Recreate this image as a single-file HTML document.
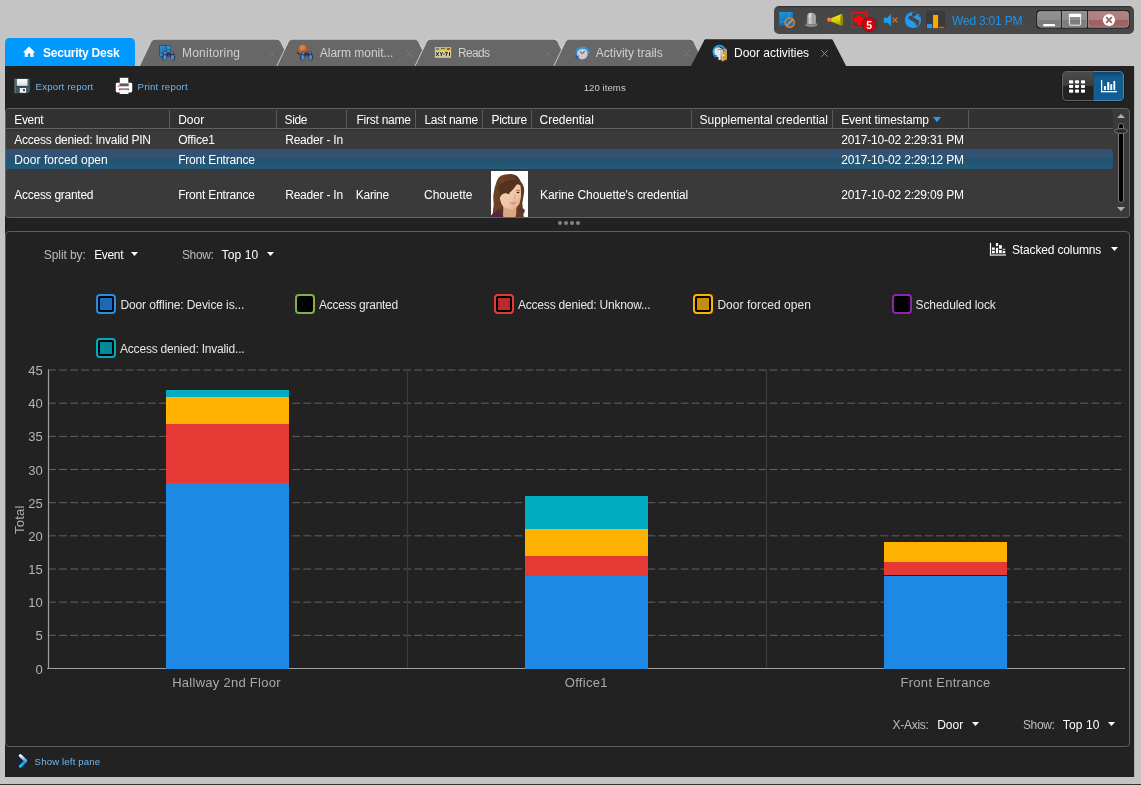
<!DOCTYPE html>
<html><head><meta charset="utf-8"><title>Security Desk</title>
<style>
html,body{margin:0;padding:0}
body{width:1141px;height:785px;overflow:hidden;background:#c4c4c4;position:relative;font-family:"Liberation Sans",sans-serif}
.t{position:absolute;white-space:nowrap;line-height:1}
.a{position:absolute;display:block}
.b{position:absolute;box-sizing:border-box}
</style></head><body><div id="w" style="position:absolute;left:0;top:0;width:1141px;height:785px;will-change:transform">

<div class="b" style="left:0;top:784px;width:1141px;height:1px;background:#333"></div>
<div class="b" style="left:5px;top:66px;width:1129px;height:711px;background:#222"></div>
<svg class="a" style="left:774px;top:6px" width="360" height="28" viewBox="774 6 360 28">
<defs>
<linearGradient id="gbtn" x1="0" y1="0" x2="0" y2="1"><stop offset="0" stop-color="#929292"/><stop offset="0.53" stop-color="#8c8c8c"/><stop offset="0.53" stop-color="#7c7c7c"/><stop offset="1" stop-color="#7e7e7e"/></linearGradient>
<linearGradient id="gcls" x1="0" y1="0" x2="0" y2="1"><stop offset="0" stop-color="#b48484"/><stop offset="0.53" stop-color="#ae7e7e"/><stop offset="0.53" stop-color="#9c6262"/><stop offset="1" stop-color="#9e6666"/></linearGradient>
<linearGradient id="gbell" x1="0" y1="0" x2="1" y2="0"><stop offset="0" stop-color="#7c7c7c"/><stop offset="0.35" stop-color="#d4d4d4"/><stop offset="0.7" stop-color="#9a9a9a"/><stop offset="1" stop-color="#b4b4b4"/></linearGradient>
<linearGradient id="ghorn" x1="0" y1="0" x2="0" y2="1"><stop offset="0" stop-color="#f0ea20"/><stop offset="0.55" stop-color="#dcd000"/><stop offset="1" stop-color="#9a9000"/></linearGradient>
<linearGradient id="gmon" x1="0" y1="0" x2="0.4" y2="1"><stop offset="0" stop-color="#2098e4"/><stop offset="1" stop-color="#0e68b2"/></linearGradient>
<linearGradient id="gtray" x1="0" y1="0" x2="0" y2="1"><stop offset="0" stop-color="#2c2c2c"/><stop offset="0.07" stop-color="#464646"/><stop offset="1" stop-color="#484848"/></linearGradient>
</defs>
<rect x="774" y="6" width="360" height="28" rx="5" fill="url(#gtray)"/>
<!-- monitor icon -->
<rect x="779.2" y="12" width="13.7" height="13.8" fill="url(#gmon)"/>
<rect x="788.6" y="12" width="0.8" height="13.8" fill="#48aeea" fill-opacity="0.7"/><rect x="779.2" y="21.6" width="13.7" height="0.8" fill="#48aeea" fill-opacity="0.6"/>
<circle cx="789.7" cy="22.6" r="4.6" fill="#1478c4" fill-opacity="0.5" stroke="#dc8030" stroke-width="1.5"/>
<path d="M786.5 25.8L792.9 19.4" stroke="#e89048" stroke-width="1.5"/>
<!-- siren -->
<path d="M806.8 24.5V17Q806.8 12.8 811.3 12.8Q815.8 12.8 815.8 17V24.5Z" fill="url(#gbell)"/>
<path d="M805.6 23.4Q811.4 25.4 817.2 23.4V25.6Q811.4 28 805.6 25.6Z" fill="#a4a4a4"/>
<path d="M806 24.2Q811.4 26.2 816.8 24.2" stroke="#666" stroke-width="0.8" fill="none"/>
<path d="M809 17Q809 14.4 811 13.6" stroke="#fff" stroke-width="0.9" fill="none" stroke-opacity="0.8"/>
<!-- horn -->
<path d="M830.4 18.4L842 13.8Q843.4 20 842 26.1L830.4 21.2Z" fill="url(#ghorn)"/>
<ellipse cx="841.8" cy="20" rx="1.5" ry="6" fill="#8e8608"/>
<circle cx="829.2" cy="19.8" r="2.2" fill="#e8701c"/>
<circle cx="828.8" cy="19.3" r="1" fill="#f69a4a"/>
<!-- red cross box -->
<rect x="851.6" y="12.6" width="14.9" height="14.7" fill="#3e4848" stroke="#ff0a0a" stroke-width="1.3"/>
<path d="M856.9 14.9h4.1v2.8h3.2v4.5h-3.2v2.9h-4.1v-2.9h-3.2v-4.5h3.2Z" fill="#ff0505"/>
<circle cx="869.2" cy="24.6" r="7.4" fill="#2c2c2c"/>
<circle cx="869.2" cy="24.6" r="6.8" fill="#d40209"/>
<!-- speaker -->
<path d="M883.8 17.7h3.7l3.6-3.9v12.5l-3.6-3.6h-3.7Z" fill="#1e9af0"/>
<path d="M892.6 17.6l4.8 4.8M897.4 17.6l-4.8 4.8" stroke="#e06a1c" stroke-width="1.3" fill="none"/>
<!-- globe -->
<circle cx="913" cy="20" r="8.1" fill="#1f9cf5"/>
<path d="M912.6 12.6q2.8-0.8 5 0.6l-1.4 1.8q-1.2 1.6-2.8 1.8q-1-0.4-1.6-1.6q-0.2-1.6 0.8-2.6Z" fill="#474747"/>
<path d="M908 17.4q1.8-2 3.6-1.4l3.8 2.6q1.8 1.4 3.6 1.6q0.8 1.8-0.2 3.6q-1 2.4-2.4 2.2q-0.8-1.2-0.6-2.6q-1.8-0.6-2.8-2.2q-2.6-0.4-4.2-2.4Q907.6 18 908 17.4Z" fill="#474747"/>
<path d="M917.8 14.4q1.6 1 2.2 2.6l-1.6-0.2Z" fill="#474747"/>
<!-- bars -->
<rect x="926" y="10.8" width="18.9" height="17.8" fill="#3a3a3a"/>
<rect x="927" y="23.9" width="5.1" height="4.3" fill="#1e9af0"/>
<rect x="933" y="14.9" width="5.1" height="13.3" fill="#ffa500"/>
<rect x="939" y="26.8" width="5.3" height="1.4" fill="#e8501c"/>
<!-- window buttons -->
<rect x="1036.3" y="10" width="93.4" height="18.4" rx="3.6" fill="#1c1c1c"/>
<path d="M1037.6 14.4Q1037.6 11.4 1040.6 11.4H1060.6V27.2H1040.6Q1037.6 27.2 1037.6 24.2Z" fill="url(#gbtn)" stroke="#a8a8a8" stroke-width="0.7"/>
<rect x="1062.4" y="11.4" width="24.2" height="15.8" fill="url(#gbtn)" stroke="#a8a8a8" stroke-width="0.7"/>
<path d="M1088.4 11.4H1125.6Q1128.6 11.4 1128.6 14.4V24.2Q1128.6 27.2 1125.6 27.2H1088.4Z" fill="url(#gcls)" stroke="#c0a0a0" stroke-width="0.7"/>
<rect x="1043.1" y="23.9" width="12" height="2.3" rx="0.8" fill="#fff"/>
<rect x="1069.4" y="14.4" width="11.2" height="10.8" rx="1" fill="none" stroke="#f0f0f0" stroke-width="1"/>
<rect x="1068.9" y="13.8" width="12.2" height="3.3" rx="1" fill="#fff"/>
<circle cx="1109" cy="20" r="6.1" fill="#fff"/>
<path d="M1106.1 17.1l5.8 5.8M1111.9 17.1l-5.8 5.8" stroke="#a46464" stroke-width="1.9" fill="none"/>
</svg>
<div class="t" style="left:866.2px;top:19.6px;font-size:10.5px;font-weight:bold;color:#fff">5</div>
<div class="t" style="left:952px;top:14.5px;font-size:12px;color:#1c92e8;letter-spacing:-0.2px">Wed 3:01 PM</div>

<div class="b" style="left:1134px;top:66px;width:1px;height:711px;background:#b2b2b2"></div>
<svg class="a" style="left:0;top:30px" width="1141" height="40" viewBox="0 30 1141 40">
<path d="M5 66V43Q5 38 10 38H130Q135 38 135 43V66Z" fill="#0099ff"/>

<path d="M139.20 66.5L150.96 41.800000000000004Q152.20 39.2 155.20 39.2H276.60Q279.60 39.2 280.84 41.800000000000004L292.60 66.5Z" fill="#676767"/><path d="M139.20 66.5L150.96 41.800000000000004Q152.20 39.2 155.20 39.2H276.60Q279.60 39.2 280.84 41.800000000000004L292.60 66.5" fill="none" stroke="#d2d2d2" stroke-width="0.9"/>
<path d="M276.60 66.5L288.36 41.800000000000004Q289.60 39.2 292.60 39.2H414.40Q417.40 39.2 418.64 41.800000000000004L430.40 66.5Z" fill="#676767"/><path d="M276.60 66.5L288.36 41.800000000000004Q289.60 39.2 292.60 39.2H414.40Q417.40 39.2 418.64 41.800000000000004L430.40 66.5" fill="none" stroke="#d2d2d2" stroke-width="0.9"/>
<path d="M414.80 66.5L426.56 41.800000000000004Q427.80 39.2 430.80 39.2H553.60Q556.60 39.2 557.84 41.800000000000004L569.60 66.5Z" fill="#676767"/><path d="M414.80 66.5L426.56 41.800000000000004Q427.80 39.2 430.80 39.2H553.60Q556.60 39.2 557.84 41.800000000000004L569.60 66.5" fill="none" stroke="#d2d2d2" stroke-width="0.9"/>
<path d="M553.60 66.5L565.36 41.800000000000004Q566.60 39.2 569.60 39.2H689.60Q692.60 39.2 693.84 41.800000000000004L705.60 66.5Z" fill="#676767"/><path d="M553.60 66.5L565.36 41.800000000000004Q566.60 39.2 569.60 39.2H689.60Q692.60 39.2 693.84 41.800000000000004L705.60 66.5" fill="none" stroke="#d2d2d2" stroke-width="0.9"/>
<path d="M690.70 66.5L704.39 40.0Q704.80 39.2 705.80 39.2H831.30Q832.30 39.2 832.71 40.0L846.40 66.5Z" fill="#222"/>
</svg>
<div class="b" style="left:5px;top:66px;width:1129px;height:3px;background:#222"></div>
<svg class="a" style="left:0;top:40px" width="850" height="26" viewBox="0 40 850 26">
<defs>
<linearGradient id="gscr" x1="0" y1="0" x2="1" y2="1"><stop offset="0" stop-color="#3496cc"/><stop offset="1" stop-color="#1c6aa4"/></linearGradient>
<radialGradient id="gbel" cx="0.45" cy="0.3" r="0.7"><stop offset="0" stop-color="#e2924a"/><stop offset="0.6" stop-color="#ca5c28"/><stop offset="1" stop-color="#a6441c"/></radialGradient>
<linearGradient id="garc" x1="1" y1="0" x2="0" y2="1"><stop offset="0" stop-color="#2c9ee4"/><stop offset="0.6" stop-color="#2a90e0"/><stop offset="1" stop-color="#1c5ed0"/></linearGradient>

</defs>
<!-- home -->
<path d="M29.1 46.4L35.2 52.4H33.4V57.1H30.3V53.6H27.9V57.1H24.8V52.4H23Z" fill="#fff"/>
<path d="M24.8 54.5H33.4V57.1H30.3V54.5H27.9V57.1H24.8Z" fill="#d8ecfc"/>
<!-- monitoring -->
<rect x="159" y="45" width="12" height="11.8" fill="#1a5a8c"/>
<rect x="160" y="46" width="6" height="6.6" fill="url(#gscr)"/><rect x="166.8" y="46" width="3.4" height="2.9" fill="#3498cc"/><rect x="166.8" y="49.7" width="3.4" height="2.9" fill="#2a86be"/>
<rect x="160" y="53.4" width="3" height="2.6" fill="#2a88c8"/><rect x="163.8" y="53.4" width="6.4" height="2.6" fill="#1f70b0"/>
<g transform="translate(162.3 51.6)">
<path d="M1.2 0.4Q2.6-1 4.6-0.2L6.3 1.4L8 -0.2Q10-1 11.4 0.4L13 6.2Q12.6 8.8 10.4 9.2Q8 8.8 7.6 5L6.3 3.2L5 5Q4.6 8.8 2.2 9.2Q0 8.8-0.4 6.2Z" fill="#2c3454"/>
<path d="M1.4 0.6Q2.6-0.6 4.4 0L5 1.2L2 3.4ZM8.2 0Q10-0.6 11.2 0.6L10.6 2.6L7.8 1.2Z" fill="#7e86a4" fill-opacity="0.8"/>
<ellipse cx="2.5" cy="5.9" rx="1.8" ry="2.8" fill="#3a80c4"/><ellipse cx="10.1" cy="5.9" rx="1.8" ry="2.8" fill="#3a80c4"/>
<ellipse cx="2.7" cy="5.4" rx="0.9" ry="1.5" fill="#4c98d6"/><ellipse cx="10.3" cy="5.4" rx="0.9" ry="1.5" fill="#4c98d6"/>
</g>
<!-- alarm -->
<path d="M297 52.2L299.8 54.6" stroke="#333" stroke-width="1.4"/>
<circle cx="302.8" cy="49.6" r="4.8" fill="url(#gbel)"/>
<circle cx="302.8" cy="50.3" r="0.9" fill="#8a8a8a"/>
<g transform="translate(300.3 51.6)">
<path d="M1.2 0.4Q2.6-1 4.6-0.2L6.3 1.4L8 -0.2Q10-1 11.4 0.4L13 6.2Q12.6 8.8 10.4 9.2Q8 8.8 7.6 5L6.3 3.2L5 5Q4.6 8.8 2.2 9.2Q0 8.8-0.4 6.2Z" fill="#2c3454"/>
<path d="M1.4 0.6Q2.6-0.6 4.4 0L5 1.2L2 3.4ZM8.2 0Q10-0.6 11.2 0.6L10.6 2.6L7.8 1.2Z" fill="#7e86a4" fill-opacity="0.8"/>
<ellipse cx="2.5" cy="5.9" rx="1.8" ry="2.8" fill="#3a80c4"/><ellipse cx="10.1" cy="5.9" rx="1.8" ry="2.8" fill="#3a80c4"/>
<ellipse cx="2.7" cy="5.4" rx="0.9" ry="1.5" fill="#4c98d6"/><ellipse cx="10.3" cy="5.4" rx="0.9" ry="1.5" fill="#4c98d6"/>
</g>
<!-- plate -->
<rect x="434.9" y="46.9" width="16.2" height="11.1" rx="0.8" fill="#d6cfae"/>
<path d="M435.7 46.9H450.3Q451.1 46.9 451.1 47.7V50.4Q447 51.2 443 50.6Q439 51.4 434.9 50.6V47.7Q434.9 46.9 435.7 46.9Z" fill="#dcc032"/>
<rect x="434.9" y="56.6" width="16.2" height="1.4" fill="#c8b96c"/>
<rect x="436.1" y="48.1" width="2.8" height="1.7" fill="#4a72d8"/><rect x="447.1" y="48.1" width="2.8" height="1.7" fill="#a83848"/>
<rect x="441" y="47.9" width="3.8" height="1" fill="#4a5468"/>
<path d="M436.1 52.2l2.6 3.7M438.7 52.2l-2.6 3.7M440 52.2l1.3 1.8l1.3-1.8M441.3 54v1.9M445.1 52.4h2.2l-1.3 3.5M449.5 52.2v3.7" stroke="#161616" stroke-width="1" fill="none"/>
<rect x="443.2" y="53.5" width="1.2" height="1.2" fill="#161616"/>
<!-- activity clock -->
<circle cx="582.3" cy="53.8" r="5.6" fill="#c2c2c2"/>
<circle cx="582.3" cy="53.8" r="4.6" fill="#cccccc"/>
<path d="M580.2 51.8L582.3 53.5L584.7 51.3" stroke="#333" stroke-width="0.9" fill="none"/>
<path d="M589.2 52.8A7 7 0 0 0 575.6 53.4Q575.4 55.6 576.4 57.4" stroke="url(#garc)" stroke-width="1.9" fill="none"/>
<path d="M574.6 56.2L579 55.6L577.6 59.6Z" fill="#1c5ed0"/>
<path d="M587.6 52.4L590.2 51.2L589.8 53.8Z" fill="#2a90e0"/>
<!-- door activities -->
<circle cx="718.2" cy="52.2" r="4.9" fill="#e6e6ea"/>
<path d="M725.2 49.4L724.4 48.6A5.85 5.85 0 0 0 713.9 53.7Q714.4 55.4 715.4 56.4" stroke="#1fa4f4" stroke-width="1.9" fill="none"/>
<path d="M713.2 55L717.2 55.2L715.4 58.2Z" fill="#1a70f0"/>
<rect x="718.6" y="48.9" width="3" height="11" fill="#c8c8cc"/>
<rect x="718.6" y="48.9" width="1.2" height="11" fill="#f2f2f2"/>
<path d="M717.6 48.9H726.8V50H717.6Z" fill="#9a9a9e"/>
<path d="M721.8 51.2L727 49.2V59.6L721.8 61.4Z" fill="#c89c4c"/>
<path d="M721.8 51.2L723 50.8V61L721.8 61.4Z" fill="#e0bc6c"/>
<circle cx="723.8" cy="55.4" r="0.8" fill="#fff"/>
</svg>

<div class="t" style="left:43.0px;top:46.64px;font-size:12px;color:#fff;letter-spacing:-0.23px;font-weight:bold;">Security Desk</div>
<div class="t" style="left:182.0px;top:46.84px;font-size:12px;color:#d0d0d0;letter-spacing:0.22px;">Monitoring</div>
<div class="t" style="left:319.8px;top:46.84px;font-size:12px;color:#d0d0d0;letter-spacing:-0.03px;">Alarm monit...</div>
<div class="t" style="left:458.0px;top:46.84px;font-size:12px;color:#d0d0d0;letter-spacing:-0.7px;">Reads</div>
<div class="t" style="left:595.8px;top:46.84px;font-size:12px;color:#d0d0d0;letter-spacing:0.02px;">Activity trails</div>
<div class="t" style="left:734.0px;top:46.84px;font-size:12px;color:#fff;letter-spacing:-0.02px;">Door activities</div>
<svg class="a" style="left:267.5px;top:50px" width="7" height="7" viewBox="0 0 7 7"><path d="M0.3 0.3L6.7 6.7M6.7 0.3L0.3 6.7" stroke="#787878" stroke-width="1" fill="none"/></svg>
<svg class="a" style="left:405.6px;top:50px" width="7" height="7" viewBox="0 0 7 7"><path d="M0.3 0.3L6.7 6.7M6.7 0.3L0.3 6.7" stroke="#787878" stroke-width="1" fill="none"/></svg>
<svg class="a" style="left:545px;top:50px" width="7" height="7" viewBox="0 0 7 7"><path d="M0.3 0.3L6.7 6.7M6.7 0.3L0.3 6.7" stroke="#787878" stroke-width="1" fill="none"/></svg>
<svg class="a" style="left:682.5px;top:50px" width="7" height="7" viewBox="0 0 7 7"><path d="M0.3 0.3L6.7 6.7M6.7 0.3L0.3 6.7" stroke="#787878" stroke-width="1" fill="none"/></svg>
<svg class="a" style="left:820.5px;top:50px" width="7" height="7" viewBox="0 0 7 7"><path d="M0.3 0.3L6.7 6.7M6.7 0.3L0.3 6.7" stroke="#8c8c8c" stroke-width="1" fill="none"/></svg>
<div class="t" style="left:35.6px;top:82.27px;font-size:9.6px;color:#74b8ee;letter-spacing:0.18px;">Export report</div>
<div class="t" style="left:137.6px;top:82.27px;font-size:9.6px;color:#74b8ee;letter-spacing:0.24px;">Print report</div>
<div class="t" style="left:583.7px;top:83.27px;font-size:9.6px;color:#ccc;letter-spacing:0.05px;">120 items</div>
<svg class="a" style="left:10px;top:76px" width="130" height="20" viewBox="10 76 130 20">
<defs>
<linearGradient id="gflop" x1="0" y1="0" x2="1" y2="0"><stop offset="0" stop-color="#6a8894"/><stop offset="0.12" stop-color="#3e5562"/><stop offset="0.88" stop-color="#3e5562"/><stop offset="1" stop-color="#5a7884"/></linearGradient>
<linearGradient id="glab" x1="0" y1="0" x2="0" y2="1"><stop offset="0" stop-color="#fff"/><stop offset="1" stop-color="#dcdcdc"/></linearGradient>
</defs>
<path d="M15.4 78.4H28.6Q29.5 78.4 29.5 79.3V91.6L27.8 93.3H15.4Q14.5 93.3 14.5 92.4V79.3Q14.5 78.4 15.4 78.4Z" fill="url(#gflop)"/>
<rect x="16.8" y="79" width="10.7" height="6.8" fill="url(#glab)"/>
<rect x="16" y="86.4" width="12.2" height="0.8" fill="#2c3e48"/>
<rect x="19.8" y="88" width="6.3" height="4.8" fill="#f0f0f0"/>
<rect x="23" y="89" width="2" height="2.2" fill="#3e5562"/>
<!-- printer -->
<path d="M117.2 82.8H130.8Q132.2 82.8 132.2 84.2V91Q132.2 92.4 130.8 92.4H117.2Q115.8 92.4 115.8 91V84.2Q115.8 82.8 117.2 82.8Z" fill="#fff"/>
<rect x="119.8" y="77.8" width="8.5" height="5.6" fill="#fafafa"/>
<rect x="119.4" y="83.4" width="9.3" height="2.9" fill="#5c5c5c"/>
<rect x="119.2" y="88.6" width="9.6" height="1.6" fill="#2a2a2a"/>
<path d="M120.4 89.6H127.8L128.6 94.1H119.6Z" fill="#f6f6f6"/>
<circle cx="118.4" cy="86.3" r="0.7" fill="#e83838"/>
</svg>

<svg class="a" style="left:1060px;top:69px" width="66" height="34" viewBox="1060 69 66 34">
<defs><linearGradient id="tgl" x1="0" y1="0" x2="0" y2="1"><stop offset="0" stop-color="#4c4c4c"/><stop offset="0.5" stop-color="#3c3c3c"/><stop offset="0.5" stop-color="#222"/><stop offset="1" stop-color="#222"/></linearGradient>
<linearGradient id="tgr" x1="0" y1="0" x2="0" y2="1"><stop offset="0" stop-color="#0c426c"/><stop offset="0.2" stop-color="#125d92"/><stop offset="1" stop-color="#125d92"/></linearGradient></defs>
<rect x="1061.5" y="70.5" width="63" height="31" rx="5.5" fill="none" stroke="#161616" stroke-width="1"/>
<path d="M1093.500 71.5H1067Q1062.500 71.5 1062.500 76V96Q1062.500 100.500 1067 100.500H1093.500Z" fill="url(#tgl)"/>
<path d="M1093.500 71.5H1119Q1123.500 71.5 1123.500 76V96Q1123.500 100.500 1119 100.500H1093.500Z" fill="url(#tgr)"/>
<path d="M1093.500 71.5H1067Q1062.500 71.5 1062.500 76V96Q1062.500 100.500 1067 100.500H1093.500" fill="none" stroke="#626262" stroke-width="1"/>
<path d="M1093.500 71.5H1119Q1123.500 71.5 1123.500 76V96Q1123.500 100.500 1119 100.500H1093.500" fill="none" stroke="#4c86b4" stroke-width="1"/>
</svg>
<svg class="a" style="left:1062px;top:71px" width="62" height="30" viewBox="1062 71 62 30">
<g fill="#fff">
<rect x="1069" y="80.3" width="4.2" height="3.2" rx="0.8"/><rect x="1075" y="80.3" width="4" height="3.2" rx="0.8"/><rect x="1081" y="80.3" width="4" height="3.2" rx="0.8"/>
<rect x="1069" y="84.9" width="4.2" height="3.2" rx="0.8"/><rect x="1075" y="84.9" width="4" height="3.2" rx="0.8"/><rect x="1081" y="84.9" width="4" height="3.2" rx="0.8"/>
<rect x="1069" y="89.5" width="4.2" height="3.2" rx="0.8"/><rect x="1075" y="89.5" width="4" height="3.2" rx="0.8"/><rect x="1081" y="89.5" width="4" height="3.2" rx="0.8"/>
<rect x="1101" y="80" width="1.2" height="12.3"/><rect x="1101" y="91" width="16" height="1.3"/>
<rect x="1103.9" y="86.1" width="2" height="3.9"/><rect x="1107.2" y="82.2" width="2.1" height="7.8"/><rect x="1110.3" y="84.2" width="1.9" height="5.8"/><rect x="1113.4" y="81" width="1.8" height="9"/>
</g>
</svg>

<div class="b" style="left:5px;top:108px;width:1125px;height:110px;border:1px solid #626262;border-radius:4px;background:#3a3a3a;overflow:hidden"><div class="b" style="left:0;top:0;width:1107px;height:20px;background:#323232;border-bottom:1px solid #626262"></div><div class="b" style="left:0;top:20px;width:1107px;height:3px;background:linear-gradient(#2f2f2f,#3a3a3a)"></div><div class="b" style="left:0;top:40px;width:1107px;height:20px;background:linear-gradient(#355073 0%,#2e5471 50%,#23526f 50%,#245b7a 100%);border-radius:0 4px 4px 0"></div></div>
<div class="b" style="left:169px;top:110px;width:1px;height:18px;background:#5a5a5a"></div>
<div class="b" style="left:276px;top:110px;width:1px;height:18px;background:#5a5a5a"></div>
<div class="b" style="left:346px;top:110px;width:1px;height:18px;background:#5a5a5a"></div>
<div class="b" style="left:415px;top:110px;width:1px;height:18px;background:#5a5a5a"></div>
<div class="b" style="left:482px;top:110px;width:1px;height:18px;background:#5a5a5a"></div>
<div class="b" style="left:531px;top:110px;width:1px;height:18px;background:#5a5a5a"></div>
<div class="b" style="left:691px;top:110px;width:1px;height:18px;background:#5a5a5a"></div>
<div class="b" style="left:832px;top:110px;width:1px;height:18px;background:#5a5a5a"></div>
<div class="b" style="left:968px;top:110px;width:1px;height:18px;background:#5a5a5a"></div>
<div class="t" style="left:14.3px;top:113.54px;font-size:12px;color:#fff;letter-spacing:-0.34px;">Event</div>
<div class="t" style="left:178.2px;top:113.54px;font-size:12px;color:#fff;">Door</div>
<div class="t" style="left:284.6px;top:113.54px;font-size:12px;color:#fff;letter-spacing:-0.41px;">Side</div>
<div class="t" style="left:356.4px;top:113.54px;font-size:12px;color:#fff;letter-spacing:-0.23px;">First name</div>
<div class="t" style="left:424.5px;top:113.54px;font-size:12px;color:#fff;letter-spacing:-0.31px;">Last name</div>
<div class="t" style="left:491.4px;top:113.54px;font-size:12px;color:#fff;letter-spacing:-0.25px;">Picture</div>
<div class="t" style="left:539.6px;top:113.54px;font-size:12px;color:#fff;letter-spacing:-0.05px;">Credential</div>
<div class="t" style="left:699.6px;top:113.54px;font-size:12px;color:#fff;letter-spacing:-0.02px;">Supplemental credential</div>
<div class="t" style="left:841.2px;top:113.54px;font-size:12px;color:#fff;letter-spacing:-0.11px;">Event timestamp</div>
<svg class="a" style="left:932.5px;top:117px" width="8" height="5" viewBox="0 0 8 5"><path d="M0 0H8L4.0 5Z" fill="#1e9fff"/></svg>
<div class="t" style="left:14.3px;top:134.34px;font-size:12px;color:#fff;letter-spacing:-0.24px;">Access denied: Invalid PIN</div>
<div class="t" style="left:178.2px;top:134.34px;font-size:12px;color:#fff;letter-spacing:-0.19px;">Office1</div>
<div class="t" style="left:285.2px;top:134.34px;font-size:12px;color:#fff;letter-spacing:-0.21px;">Reader - In</div>
<div class="t" style="left:841.2px;top:134.34px;font-size:12px;color:#fff;letter-spacing:-0.16px;">2017-10-02 2:29:31 PM</div>
<div class="t" style="left:14.3px;top:154.34px;font-size:12px;color:#fff;letter-spacing:0.05px;">Door forced open</div>
<div class="t" style="left:178.2px;top:154.34px;font-size:12px;color:#fff;letter-spacing:-0.2px;">Front Entrance</div>
<div class="t" style="left:841.2px;top:154.34px;font-size:12px;color:#fff;letter-spacing:-0.16px;">2017-10-02 2:29:12 PM</div>
<div class="t" style="left:14.3px;top:188.84px;font-size:12px;color:#fff;letter-spacing:-0.27px;">Access granted</div>
<div class="t" style="left:178.2px;top:188.84px;font-size:12px;color:#fff;letter-spacing:-0.2px;">Front Entrance</div>
<div class="t" style="left:285.2px;top:188.84px;font-size:12px;color:#fff;letter-spacing:-0.21px;">Reader - In</div>
<div class="t" style="left:355.8px;top:188.84px;font-size:12px;color:#fff;letter-spacing:-0.28px;">Karine</div>
<div class="t" style="left:424.0px;top:188.84px;font-size:12px;color:#fff;letter-spacing:-0.03px;">Chouette</div>
<div class="t" style="left:540.0px;top:188.84px;font-size:12px;color:#fff;letter-spacing:-0.08px;">Karine Chouette's credential</div>
<div class="t" style="left:841.2px;top:188.84px;font-size:12px;color:#fff;letter-spacing:-0.16px;">2017-10-02 2:29:09 PM</div>
<svg class="a" style="left:491px;top:171px" width="37" height="46" viewBox="0 0 37 46">
<defs><filter id="bl" x="-10%" y="-10%" width="120%" height="120%"><feGaussianBlur stdDeviation="0.55"/></filter>
<clipPath id="pc"><rect width="37" height="46"/></clipPath>
<linearGradient id="ghair" x1="0" y1="0" x2="1" y2="1"><stop offset="0" stop-color="#7a4c2c"/><stop offset="0.45" stop-color="#5a361e"/><stop offset="1" stop-color="#6a4024"/></linearGradient>
<linearGradient id="gskin" x1="0" y1="0" x2="1" y2="1"><stop offset="0" stop-color="#f6d4b8"/><stop offset="0.6" stop-color="#efc4a4"/><stop offset="1" stop-color="#dca888"/></linearGradient>
</defs>
<rect width="37" height="46" fill="#fff"/>
<g clip-path="url(#pc)" filter="url(#bl)">
<!-- back hair mass -->
<path d="M7.6 6.4Q10 4 14 3.5Q18 2.8 21.7 3.2Q24.4 3.6 26.1 5.1Q28.4 7.6 29.9 10.8Q31.6 13 32.5 15.3Q33.4 18 33.1 21Q32.8 24 32.2 26.8L31.2 32.5Q31.6 38 32.5 45.2L33 47H-1L0.3 44.6Q1.5 43.2 1.9 41.4Q2.6 37 2.9 33.1Q2.2 28 2.5 23.6Q3 18 4.5 14Q5.6 9.4 7.6 6.4Z" fill="url(#ghair)"/>
<!-- neck -->
<path d="M12.4 34L25.4 36L25.2 47H12Z" fill="#dba684"/>
<!-- face -->
<path d="M12 19Q16 14.5 22 13.2Q27 12.6 29.9 14.6Q30.6 20 29.9 26.8Q29.2 31 28 33.8Q25.4 37.6 21.7 38.4Q17 38.4 12.7 36.3Q10 33.4 9.2 29Q8.4 25 9.6 22Q10.4 20.2 12 19Z" fill="url(#gskin)"/>
<!-- fringe sweeping over forehead -->
<path d="M6 24Q6 14 14 9Q21 6 27 9.4Q29 11 29.9 13.6Q27.6 12 25.6 13.6Q23.4 17.6 20 20.4Q17 22.4 14 22.2Q10.6 22.6 9 26.4Q7.6 27 6 24Z" fill="#54321c"/>
<path d="M10 12Q16 7 24 8.4" stroke="#7e5030" stroke-width="1.2" fill="none" stroke-opacity="0.7"/>
<!-- right side hair strip -->
<path d="M29.4 12Q32 16 31.9 22Q31.6 28 30.6 33L29.6 32Q30.8 24 29.6 15Z" fill="#5e3a20"/>
<!-- left hair over cheek -->
<path d="M3 22Q5 17 8.4 19.6Q9.4 23 8.6 27Q9 32 11 36Q9 40 6 42.4L2 43.4Q3 36 2.9 30Q2.4 26 3 22Z" fill="#6c4226"/>
<!-- eyes + brows -->
<ellipse cx="17.3" cy="22" rx="1.6" ry="0.85" fill="#2e1c14"/><ellipse cx="27" cy="21.5" rx="1.4" ry="0.8" fill="#2e1c14"/>
<path d="M25 19.6Q27 18.8 29 19.6" stroke="#6a4630" stroke-width="0.6" fill="none"/>
<!-- nose shade -->
<path d="M23.6 23.4Q24.8 26.4 23.8 27.6Q22.8 28 22 27.6" stroke="#d69c80" stroke-width="0.8" fill="none"/>
<!-- lips -->
<path d="M18.4 31Q22 30 26.2 30.6Q24.4 33.4 21.4 33.2Q19.4 32.8 18.4 31Z" fill="#d8857a"/>
<path d="M19.6 31.3Q22 31 25 31.1" stroke="#f6e6e0" stroke-width="0.5" fill="none"/>
<!-- right lower hair -->
<path d="M27.6 34.6Q30 33 31.2 32.5Q31.4 39 32.6 47H24Q26.4 41 27.6 34.6Z" fill="#5e3a20"/>
<!-- purple top -->
<path d="M-1 45.6Q2.4 42.4 5 40.6Q6.6 39 7.6 37.6Q10 41.6 13 47H-1Z" fill="#54263f"/>
<path d="M30 36.8Q32.4 37.2 33.9 38.9Q33.6 41.4 32.5 42.8Q31 42.8 30.2 42Q30.6 39.4 30 36.8Z" fill="#5e2a4c"/>
</g>
</svg>

<svg class="a" style="left:1113px;top:110px" width="16" height="106" viewBox="1113 110 16 106">
<path d="M1121 113.9L1125 118H1117Z" fill="#b0b0b0"/>
<path d="M1121 211.3L1125 207H1117Z" fill="#b0b0b0"/>
<rect x="1118.5" y="123.5" width="5" height="79" rx="2.5" fill="#000" stroke="#777" stroke-width="1"/>
<ellipse cx="1121" cy="131" rx="6.6" ry="2.4" fill="#2a2a2a" stroke="#7a7a7a" stroke-width="1"/>
</svg>

<div class="b" style="left:558.0px;top:221px;width:4px;height:4px;border-radius:2px;background:#848484"></div>
<div class="b" style="left:564.0px;top:221px;width:4px;height:4px;border-radius:2px;background:#848484"></div>
<div class="b" style="left:570.0px;top:221px;width:4px;height:4px;border-radius:2px;background:#848484"></div>
<div class="b" style="left:576.0px;top:221px;width:4px;height:4px;border-radius:2px;background:#848484"></div>
<div class="b" style="left:5px;top:231px;width:1125px;height:516px;border:1px solid #5e5e5e;border-radius:4px"></div>
<div class="t" style="left:43.8px;top:248.64px;font-size:12px;color:#bdbdbd;letter-spacing:-0.08px;">Split by:</div>
<div class="t" style="left:94.2px;top:248.64px;font-size:12px;color:#fff;letter-spacing:-0.34px;">Event</div>
<svg class="a" style="left:131px;top:252px" width="7" height="4" viewBox="0 0 7 4"><path d="M0 0H7L3.5 4Z" fill="#fff"/></svg>
<div class="t" style="left:182.0px;top:248.64px;font-size:12px;color:#bdbdbd;letter-spacing:-0.39px;">Show:</div>
<div class="t" style="left:221.5px;top:248.64px;font-size:12px;color:#fff;letter-spacing:0.13px;">Top 10</div>
<svg class="a" style="left:267px;top:252px" width="7" height="4" viewBox="0 0 7 4"><path d="M0 0H7L3.5 4Z" fill="#fff"/></svg>
<div class="t" style="left:1012.0px;top:244.34px;font-size:12px;color:#fff;letter-spacing:-0.15px;">Stacked columns</div>
<svg class="a" style="left:1111px;top:247px" width="7" height="4" viewBox="0 0 7 4"><path d="M0 0H7L3.5 4Z" fill="#fff"/></svg>
<svg class="a" style="left:988px;top:241px" width="20" height="16" viewBox="988 241 20 16">
<rect x="989.9" y="242.9" width="1.2" height="13" fill="#fff"/>
<rect x="989.9" y="254.2" width="16.1" height="1.7" fill="#b4b4b4"/>
<g fill="#fff">
<rect x="992" y="247.5" width="2.8" height="2.3"/><rect x="992" y="250.8" width="2.8" height="2.5"/>
<rect x="995.9" y="243" width="2.2" height="3.1"/><rect x="995.9" y="247.8" width="2.2" height="5.5"/>
<rect x="999" y="245.1" width="2.8" height="3.7"/><rect x="999" y="250" width="2.8" height="3.3"/>
<rect x="1002.6" y="248.8" width="2.6" height="1"/><rect x="1002.6" y="250.9" width="2.6" height="2.4"/>
</g>
</svg>

<div class="b" style="left:96px;top:294px;width:20px;height:20px;border:2px solid #2090f0;border-radius:4px;background:#000"><div class="b" style="left:2px;top:2px;width:12px;height:12px;background:#1b6ab8"></div></div><div class="t" style="left:120.4px;top:299.44px;font-size:12px;color:#e6e6e6;letter-spacing:-0.1px;">Door offline: Device is...</div>
<div class="b" style="left:295px;top:294px;width:20px;height:20px;border:2px solid #7cb342;border-radius:4px;background:#000"><div class="b" style="left:2px;top:2px;width:12px;height:12px;background:#000"></div></div><div class="t" style="left:319.0px;top:299.44px;font-size:12px;color:#e6e6e6;letter-spacing:-0.27px;">Access granted</div>
<div class="b" style="left:494px;top:294px;width:20px;height:20px;border:2px solid #e53935;border-radius:4px;background:#000"><div class="b" style="left:2px;top:2px;width:12px;height:12px;background:#b82d2b"></div></div><div class="t" style="left:518.0px;top:299.44px;font-size:12px;color:#e6e6e6;letter-spacing:-0.21px;">Access denied: Unknow...</div>
<div class="b" style="left:693px;top:294px;width:20px;height:20px;border:2px solid #ffb300;border-radius:4px;background:#000"><div class="b" style="left:2px;top:2px;width:12px;height:12px;background:#c88c0a"></div></div><div class="t" style="left:717.4px;top:299.44px;font-size:12px;color:#e6e6e6;letter-spacing:0.05px;">Door forced open</div>
<div class="b" style="left:892px;top:294px;width:20px;height:20px;border:2px solid #8e24aa;border-radius:4px;background:#000"><div class="b" style="left:2px;top:2px;width:12px;height:12px;background:#000"></div></div><div class="t" style="left:915.5px;top:299.44px;font-size:12px;color:#e6e6e6;letter-spacing:-0.08px;">Scheduled lock</div>
<div class="b" style="left:96px;top:338px;width:20px;height:20px;border:2px solid #00acc1;border-radius:4px;background:#000"><div class="b" style="left:2px;top:2px;width:12px;height:12px;background:#008a9b"></div></div><div class="t" style="left:120.0px;top:343.44px;font-size:12px;color:#e6e6e6;letter-spacing:-0.2px;">Access denied: Invalid...</div>
<svg class="a" style="left:0;top:360px" width="1141" height="320" viewBox="0 360 1141 320" shape-rendering="crispEdges"><path d="M48 635.34H1125" stroke="#626262" stroke-width="1" stroke-dasharray="7.9 3.2" fill="none" shape-rendering="auto"/><path d="M48 602.17H1125" stroke="#626262" stroke-width="1" stroke-dasharray="7.9 3.2" fill="none" shape-rendering="auto"/><path d="M48 569.00H1125" stroke="#626262" stroke-width="1" stroke-dasharray="7.9 3.2" fill="none" shape-rendering="auto"/><path d="M48 535.84H1125" stroke="#626262" stroke-width="1" stroke-dasharray="7.9 3.2" fill="none" shape-rendering="auto"/><path d="M48 502.68H1125" stroke="#626262" stroke-width="1" stroke-dasharray="7.9 3.2" fill="none" shape-rendering="auto"/><path d="M48 469.51H1125" stroke="#626262" stroke-width="1" stroke-dasharray="7.9 3.2" fill="none" shape-rendering="auto"/><path d="M48 436.35H1125" stroke="#626262" stroke-width="1" stroke-dasharray="7.9 3.2" fill="none" shape-rendering="auto"/><path d="M48 403.18H1125" stroke="#626262" stroke-width="1" stroke-dasharray="7.9 3.2" fill="none" shape-rendering="auto"/><path d="M48 370.01H1125" stroke="#626262" stroke-width="1" stroke-dasharray="7.9 3.2" fill="none" shape-rendering="auto"/><path d="M407.5 370V668" stroke="#3a3c40" stroke-width="1.2" fill="none" shape-rendering="auto"/><path d="M766.5 370V668" stroke="#3a3c40" stroke-width="1.2" fill="none" shape-rendering="auto"/><path d="M48.5 369.5V669" stroke="#a0a0a0" stroke-width="1.2" fill="none" shape-rendering="auto"/><path d="M47 668.5H1125" stroke="#a0a0a0" stroke-width="1.2" fill="none" shape-rendering="auto"/><rect x="166" y="390" width="123" height="7" fill="#00acc1"/><rect x="166" y="397" width="123" height="27" fill="#ffb300"/><rect x="166" y="424" width="123" height="59" fill="#e53935"/><rect x="166" y="483" width="123" height="186" fill="#1e88e5"/><rect x="525" y="496" width="123" height="33" fill="#00acc1"/><rect x="525" y="529" width="123" height="27" fill="#ffb300"/><rect x="525" y="556" width="123" height="20" fill="#e53935"/><rect x="525" y="576" width="123" height="93" fill="#1e88e5"/><rect x="884" y="542" width="123" height="20" fill="#ffb300"/><rect x="884" y="562" width="123" height="13" fill="#e53935"/><rect x="884" y="575" width="123" height="1" fill="#1c1c1c"/><rect x="884" y="576" width="123" height="93" fill="#1e88e5"/></svg>
<div class="t" style="left:35.6px;top:662.50px;font-size:13px;color:#b4b4b4;">0</div>
<div class="t" style="left:35.6px;top:629.34px;font-size:13px;color:#b4b4b4;">5</div>
<div class="t" style="left:28.3px;top:596.19px;font-size:13px;color:#b4b4b4;">10</div>
<div class="t" style="left:28.3px;top:563.03px;font-size:13px;color:#b4b4b4;">15</div>
<div class="t" style="left:28.3px;top:529.88px;font-size:13px;color:#b4b4b4;">20</div>
<div class="t" style="left:28.3px;top:496.72px;font-size:13px;color:#b4b4b4;">25</div>
<div class="t" style="left:28.3px;top:463.57px;font-size:13px;color:#b4b4b4;">30</div>
<div class="t" style="left:28.3px;top:430.41px;font-size:13px;color:#b4b4b4;">35</div>
<div class="t" style="left:28.3px;top:397.26px;font-size:13px;color:#b4b4b4;">40</div>
<div class="t" style="left:28.3px;top:364.10px;font-size:13px;color:#b4b4b4;">45</div>
<div class="t" style="left:12.5px;top:533.7px;font-size:13px;color:#aaa;letter-spacing:0.21px;transform-origin:0 0;transform:rotate(-90deg)">Total</div>
<div class="t" style="left:172.2px;top:675.90px;font-size:13px;color:#aaa;letter-spacing:0.27px;">Hallway 2nd Floor</div>
<div class="t" style="left:564.8px;top:675.90px;font-size:13px;color:#aaa;letter-spacing:0.29px;">Office1</div>
<div class="t" style="left:900.5px;top:675.90px;font-size:13px;color:#aaa;letter-spacing:0.29px;">Front Entrance</div>
<div class="t" style="left:892.6px;top:718.54px;font-size:12px;color:#bdbdbd;letter-spacing:-0.3px;">X-Axis:</div>
<div class="t" style="left:937.2px;top:718.54px;font-size:12px;color:#fff;">Door</div>
<svg class="a" style="left:972px;top:722px" width="7" height="4" viewBox="0 0 7 4"><path d="M0 0H7L3.5 4Z" fill="#fff"/></svg>
<div class="t" style="left:1023.0px;top:718.54px;font-size:12px;color:#bdbdbd;letter-spacing:-0.39px;">Show:</div>
<div class="t" style="left:1062.8px;top:718.54px;font-size:12px;color:#fff;letter-spacing:0.13px;">Top 10</div>
<svg class="a" style="left:1108px;top:722px" width="7" height="4" viewBox="0 0 7 4"><path d="M0 0H7L3.5 4Z" fill="#fff"/></svg>
<div class="t" style="left:34.6px;top:757.17px;font-size:9.6px;color:#74b8ee;letter-spacing:0.16px;">Show left pane</div>
<svg class="a" style="left:14px;top:750px" width="18" height="22" viewBox="14 750 18 22">
<defs>
<linearGradient id="gch1" x1="0" y1="0" x2="0" y2="1"><stop offset="0" stop-color="#fdfdff"/><stop offset="1" stop-color="#5a98d8"/></linearGradient>
<linearGradient id="gch2" x1="0" y1="0" x2="0" y2="1"><stop offset="0" stop-color="#0f86dc"/><stop offset="1" stop-color="#12c4f2"/></linearGradient>
</defs>
<path d="M20.3 755.6L25.7 760.9L20.3 766.2" stroke="#0a2044" stroke-width="4.6" stroke-linecap="round" stroke-linejoin="miter" fill="none"/>
<path d="M25.7 760.9L20.3 766.2" stroke="url(#gch2)" stroke-width="3" stroke-linecap="round" fill="none"/>
<path d="M20.3 755.6L25.7 760.9" stroke="url(#gch1)" stroke-width="3" stroke-linecap="round" fill="none"/>
</svg>

</div></body></html>
